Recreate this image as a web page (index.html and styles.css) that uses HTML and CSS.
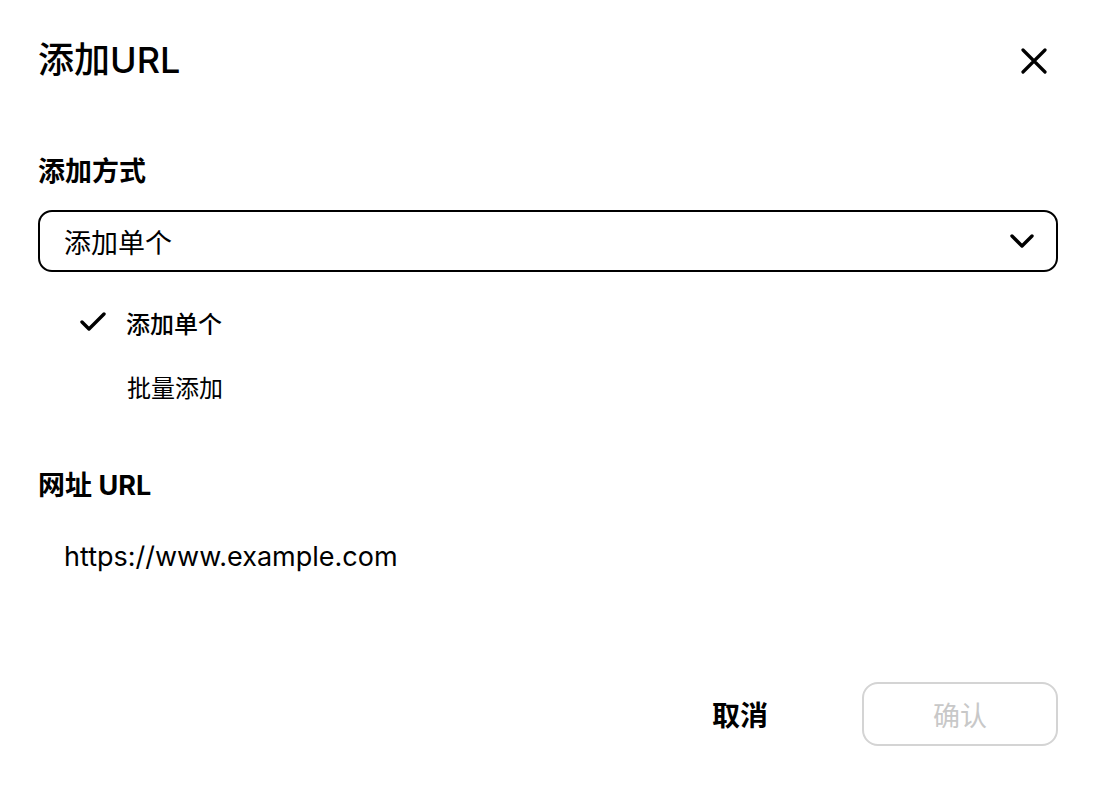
FILE: index.html
```html
<!DOCTYPE html>
<html lang="zh">
<head>
<meta charset="utf-8">
<link rel="stylesheet" href="styles.css">
</head>
<body>
<div class="dialog">
  <header class="head">
    <h1 class="title">添加URL</h1>
    <button class="close" aria-label="关闭">
      <svg width="26" height="26" viewBox="0 0 26 26"><path d="M2 2L24 24M24 2L2 24" stroke="#000" stroke-width="3.2" stroke-linecap="round"/></svg>
    </button>
  </header>

  <section class="field">
    <div class="label">添加方式</div>
    <div class="select">
      <span class="select-text">添加单个</span>
      <svg class="chev" width="24" height="14" viewBox="0 0 24 14"><path d="M2 2L12 12L22 2" fill="none" stroke="#000" stroke-width="3.4" stroke-linecap="round" stroke-linejoin="round"/></svg>
    </div>
    <ul class="options">
      <li class="opt selected">
        <svg class="check" width="26" height="20" viewBox="0 0 26 20"><path d="M2 10L9 17L24 2" fill="none" stroke="#000" stroke-width="3.4" stroke-linecap="round" stroke-linejoin="round"/></svg>
        <span>添加单个</span>
      </li>
      <li class="opt"><span>批量添加</span></li>
    </ul>
  </section>

  <section class="field url">
    <div class="label">网址 URL</div>
    <div class="url-text">https://www.example.com</div>
  </section>

  <footer class="actions">
    <button class="btn cancel">取消</button>
    <button class="btn confirm" disabled>确认</button>
  </footer>
</div>
</body>
</html>
```

FILE: styles.css
```css
* { box-sizing: border-box; margin: 0; padding: 0; }
html, body { background: #fff; }
body {
  font-family: Inter, "Noto Sans CJK SC", sans-serif;
  color: #000;
  width: 1098px;
  height: 786px;
  overflow: hidden;
}
.dialog {
  padding: 36px 40px 0 38px;
  display: flex;
  flex-direction: column;
}
.head {
  display: flex;
  justify-content: space-between;
  align-items: center;
  height: 48px;
}
.title {
  font-size: 36px;
  font-weight: 500;
  line-height: 48px;
}
.close {
  border: 0;
  background: none;
  width: 26px;
  height: 26px;
  margin-right: 11px;
  margin-top: 2px;
  display: flex;
}
.field { margin-top: 70px; }
.label {
  font-size: 27px;
  font-weight: 700;
  line-height: 36px;
}
.select {
  margin-top: 20px;
  height: 62px;
  border: 2px solid #000;
  border-radius: 14px;
  display: flex;
  align-items: center;
  justify-content: space-between;
  padding: 0 22px 0 24px;
}
.select-text { font-size: 27px; }
.options {
  list-style: none;
  padding: 18px 0 0 42px;
}
.opt {
  height: 64px;
  display: flex;
  align-items: center;
  font-size: 24px;
  padding-left: 47px;
}
.opt.selected {
  padding-left: 0;
  font-weight: 500;
}
.check { margin-right: 20px; }
.field.url { margin-top: 50px; }
.url-text {
  margin-top: 36px;
  padding-left: 26px;
  font-size: 27px;
}
.actions {
  margin-top: 109px;
  display: flex;
  justify-content: flex-end;
  align-items: center;
}
.btn {
  font-family: inherit;
  background: none;
  border: 0;
  font-size: 28px;
  color: #000;
}
.cancel { font-weight: 700; margin-right: 94px; }
.confirm {
  width: 196px;
  height: 64px;
  border: 2px solid #d4d4d4;
  border-radius: 16px;
  color: #c8c8c8;
  font-size: 27px;
}
```
